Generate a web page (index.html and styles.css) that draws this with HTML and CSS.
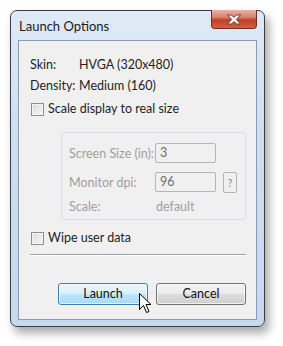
FILE: index.html
```html
<!DOCTYPE html>
<html lang="en">
<head>
    <meta charset="UTF-8">
    <title>Launch Options</title>
    <link rel="stylesheet" href="styles.css">
</head>
<body>
<div class="window">
    <div class="title_bar">
        <span class="title_text">Launch Options</span>
        <span class="close_btn">
            <svg width="16" height="11" viewBox="0 0 16 11">
                <path d="M1.5 1 L5.5 1 L8 3.5 L10.5 1 L14.5 1 L10.3 5.5 L14.5 10 L10.5 10 L8 7.5 L5.5 10 L1.5 10 L5.7 5.5 Z" fill="#fff" stroke="#6b3a33" stroke-width="1" stroke-linejoin="round"/>
            </svg>
        </span>
    </div>
    <div class="client">
        <div class="info_row"><span class="info_label">Skin:</span><span>HVGA (320x480)</span></div>
        <div class="info_row density"><span class="info_label">Density:</span><span>Medium (160)</span></div>
        <div class="check_row scale_check"><span class="check_box"></span>Scale display to real size</div>

        <div class="group_box">
            <div class="field_row">
                <span class="field_label">Screen Size (in):</span>
                <span class="text_input">3</span>
            </div>
            <div class="field_row dpi_row">
                <span class="field_label">Monitor dpi:</span>
                <span class="text_input">96</span>
                <span class="help_btn">?</span>
            </div>
            <div class="field_row scale_row">
                <span class="field_label">Scale:</span>
                <span class="scale_value">default</span>
            </div>
        </div>

        <div class="check_row wipe_check"><span class="check_box"></span>Wipe user data</div>
        <div class="separator"></div>

        <div class="button_row">
            <span class="push_btn launch_btn">Launch</span>
            <span class="push_btn">Cancel</span>
        </div>
    </div>
</div>

<svg class="cursor" width="13" height="21" viewBox="0 0 13 21">
    <path d="M0.5 0.5 L0.5 16.5 L4.5 12.5 L7.5 19.5 L10 18.5 L7 11.5 L12 11.5 Z" fill="#fff" stroke="#000" stroke-width="1" stroke-linejoin="miter"/>
</svg>
</body>
</html>
```

FILE: styles.css
```css
body{
    margin: 0;
    background-color: #ffffff;
    font-family: 'Lato', 'Liberation Sans', sans-serif;
    font-size: 12.5px;
    color: #1e1e1e;
    width: 283px;
    height: 346px;
    overflow: hidden;
}

.window{
    margin: 10px 0 0 10px;
    width: 253px;
    height: 315px;
    border: 1px solid #3a3d42;
    border-radius: 7px;
    background: linear-gradient(#dfeaf6, #cddef1 40%, #c6d9ef);
    box-shadow: 4px 6px 10px rgba(0, 0, 0, 0.35);
    display: flex;
    flex-direction: column;
}

.title_bar{
    height: 29px;
    display: flex;
    justify-content: space-between;
    align-items: flex-start;
}

.title_text{
    margin: 7px 0 0 8px;
    font-size: 13px;
    color: #1b1b1b;
}

.close_btn{
    margin: -1px 7px 0 0;
    width: 44px;
    height: 18px;
    border: 1px solid #6e2e24;
    border-top: none;
    border-radius: 0 0 4px 4px;
    background: linear-gradient(#eab2a4, #d98270 40%, #c0402a 55%, #d65d44);
    display: flex;
    align-items: center;
    justify-content: center;
}

.client{
    margin: 0 7px 6px 7px;
    flex: 1;
    border: 1px solid #8b9bb0;
    background-color: #f0f0f0;
    padding: 16px 0 0 11px;
}

.info_row{
    height: 16px;
    line-height: 16px;
    display: flex;
}

.info_label{
    width: 49px;
}

.density{
    margin-top: 5px;
}

.check_row{
    height: 16px;
    line-height: 16px;
    display: flex;
    align-items: center;
}

.check_box{
    width: 11px;
    height: 11px;
    border: 1px solid #8f8f8f;
    background: linear-gradient(135deg, #dcdcdc, #f6f6f6);
    box-shadow: inset 0 0 0 1px #f4f4f4;
    margin: 0 4px 0 1px;
}

.scale_check{
    margin-top: 7px;
}

.group_box{
    margin: 15px 0 0 31px;
    width: 176px;
    height: 76px;
    border: 1px solid #d9dde3;
    border-radius: 3px;
    padding: 10px 0 0 7px;
    color: #9f9f9f;
}

.field_row{
    display: flex;
    align-items: center;
    height: 20px;
}

.dpi_row{
    margin-top: 9px;
}

.field_label{
    width: 86px;
}

.text_input{
    width: 55px;
    height: 18px;
    line-height: 18px;
    border: 1px solid #b5b5b5;
    border-radius: 2px;
    padding-left: 4px;
    color: #6d6d6d;
    background-color: #f0f0f0;
}

.help_btn{
    margin-left: 7px;
    width: 12px;
    height: 19px;
    line-height: 19px;
    border: 1px solid #b3b3b3;
    border-radius: 2px;
    text-align: center;
    font-size: 11px;
    color: #8a8a8a;
}

.scale_row{
    margin-top: 6px;
    height: 16px;
}

.scale_value{
    padding-left: 1px;
}

.wipe_check{
    margin-top: 10px;
}

.separator{
    margin-top: 8px;
    width: 216px;
    border-top: 1px solid #a0a0a0;
    border-bottom: 1px solid #ffffff;
}

.button_row{
    margin-top: 27px;
    width: 216px;
    display: flex;
    justify-content: flex-end;
    gap: 8px;
}

.push_btn{
    width: 88px;
    height: 20px;
    line-height: 20px;
    text-align: center;
    border: 1px solid #707070;
    border-radius: 3px;
    background: linear-gradient(#f2f2f2, #ebebeb 50%, #dddddd 51%, #cfcfcf);
    box-shadow: inset 0 0 0 1px rgba(255, 255, 255, 0.7);
    color: #111;
}

.launch_btn{
    border-color: #3c7fb1;
    background: linear-gradient(#eaf6fd, #d9f0fc 50%, #bee6fd 51%, #a7d9f5);
}

.cursor{
    position: absolute;
    left: 139px;
    top: 293px;
}
```
